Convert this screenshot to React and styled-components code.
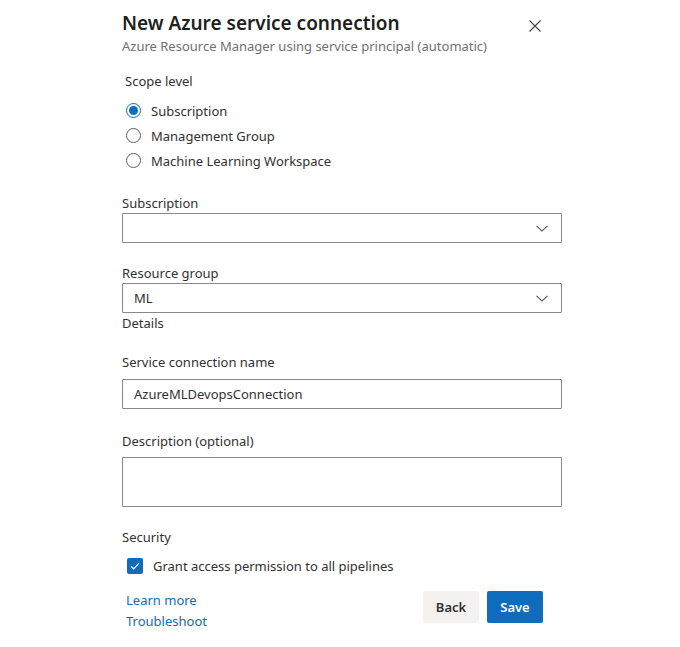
import React from "react";
import styled, { createGlobalStyle } from "styled-components";

const Global = createGlobalStyle`
  html, body { margin: 0; padding: 0; background: #ffffff; }
  body { font-family: "Segoe UI", "Noto Sans", "Liberation Sans", sans-serif; color: #323130; }
  * { box-sizing: border-box; }
`;

const Dialog = styled.div`
  width: 680px;
  height: 647px;
  padding: 9px 0 0 122px;
  background: #fff;
`;

const Panel = styled.div`
  width: 440px;
  display: flex;
  flex-direction: column;
`;

const Header = styled.div`
  display: flex;
  align-items: flex-start;
  justify-content: space-between;
`;

const TitleBlock = styled.div`
  display: flex;
  flex-direction: column;
`;

const Title = styled.h1`
  margin: 0;
  font-size: 19px;
  line-height: 28px;
  font-weight: 600;
  color: #201f1e;
`;

const Subtitle = styled.div`
  font-size: 13px;
  line-height: 18px;
  color: #707070;
`;

const CloseButton = styled.button`
  border: 0;
  background: transparent;
  padding: 0;
  margin: 11px 21px 0 0;
  width: 12px;
  height: 12px;
  display: flex;
  color: #484644;
`;

const Label = styled.div`
  font-size: 13px;
  line-height: 20px;
  color: #323130;
  margin-top: ${(p) => p.$mt || 0}px;
  margin-left: ${(p) => p.$ml || 0}px;
  margin-bottom: ${(p) => p.$mb || 0}px;
`;

const RadioGroup = styled.div`
  display: flex;
  flex-direction: column;
  margin-top: 7px;
`;

const RadioRow = styled.label`
  display: flex;
  align-items: center;
  height: 25px;
  font-size: 13px;
  color: #323130;
  padding-left: 4px;
  gap: 10px;
`;

const RadioCircle = styled.span`
  width: 15px;
  height: 15px;
  border-radius: 50%;
  border: 1px solid ${(p) => (p.$checked ? "#0f6cbd" : "#605e5c")};
  display: flex;
  align-items: center;
  justify-content: center;
  flex: none;
  &::after {
    content: "";
    width: 9px;
    height: 9px;
    border-radius: 50%;
    background: #0f6cbd;
    display: ${(p) => (p.$checked ? "block" : "none")};
  }
`;

const Field = styled.div`
  height: ${(p) => p.$h || 30}px;
  border: 1px solid #8a8886;
  border-radius: 1px;
  display: flex;
  align-items: ${(p) => (p.$multi ? "flex-start" : "center")};
  justify-content: space-between;
  padding: 0 12px 0 11px;
  font-size: 13px;
  color: #323130;
  background: #fff;
`;

const Chevron = styled.svg`
  width: 12px;
  height: 7px;
  color: #605e5c;
  flex: none;
  margin-right: 1px;
`;

const CheckRow = styled.label`
  display: flex;
  align-items: center;
  gap: 10px;
  height: 20px;
  margin-top: 9px;
  padding-left: 5px;
  font-size: 13px;
  color: #323130;
`;

const CheckBox = styled.span`
  width: 16px;
  height: 16px;
  border-radius: 2px;
  background: #0f6cbd;
  display: flex;
  align-items: center;
  justify-content: center;
  flex: none;
`;

const Footer = styled.div`
  display: flex;
  justify-content: space-between;
  align-items: flex-start;
  margin-top: 14px;
  padding: 0 19px 0 4px;
`;

const Links = styled.div`
  display: flex;
  flex-direction: column;
`;

const Link = styled.a`
  font-size: 13px;
  line-height: 21px;
  color: #0f6cbd;
  text-decoration: none;
`;

const Buttons = styled.div`
  display: flex;
  gap: 8px;
  margin-top: 1px;
`;

const Button = styled.button`
  height: 32px;
  width: 56px;
  border: 0;
  border-radius: 2px;
  font-family: inherit;
  font-size: 13px;
  font-weight: 600;
  background: ${(p) => (p.$primary ? "#0f6cbd" : "#f3f2f1")};
  color: ${(p) => (p.$primary ? "#ffffff" : "#323130")};
`;

const ChevronDown = () => (
  <Chevron viewBox="0 0 12 7" fill="none">
    <path d="M0.5 0.8 L6 6 L11.5 0.8" stroke="currentColor" strokeWidth="1.1" />
  </Chevron>
);

export default function App() {
  return (
    <>
      <Global />
      <Dialog>
        <Panel>
          <Header>
            <TitleBlock>
              <Title>New Azure service connection</Title>
              <Subtitle>Azure Resource Manager using service principal (automatic)</Subtitle>
            </TitleBlock>
            <CloseButton aria-label="Close">
              <svg width="12" height="12" viewBox="0 0 12 12">
                <path d="M0.5 0.5 L11.5 11.5 M11.5 0.5 L0.5 11.5" stroke="currentColor" strokeWidth="1.1" />
              </svg>
            </CloseButton>
          </Header>

          <Label $mt={16} $ml={3}>Scope level</Label>
          <RadioGroup>
            <RadioRow><RadioCircle $checked />Subscription</RadioRow>
            <RadioRow><RadioCircle />Management Group</RadioRow>
            <RadioRow><RadioCircle />Machine Learning Workspace</RadioRow>
          </RadioGroup>

          <Label $mt={20}>Subscription</Label>
          <Field><span /><ChevronDown /></Field>

          <Label $mt={20}>Resource group</Label>
          <Field><span>ML</span><ChevronDown /></Field>
          <Label>Details</Label>

          <Label $mt={19} $mb={7}>Service connection name</Label>
          <Field>AzureMLDevopsConnection</Field>

          <Label $mt={22} $mb={6}>Description (optional)</Label>
          <Field $h={50} $multi />

          <Label $mt={20}>Security</Label>
          <CheckRow>
            <CheckBox>
              <svg width="10" height="8" viewBox="0 0 10 8" fill="none">
                <path d="M1 4.2 L3.7 6.8 L9 1.2" stroke="#fff" strokeWidth="1.2" />
              </svg>
            </CheckBox>
            Grant access permission to all pipelines
          </CheckRow>

          <Footer>
            <Links>
              <Link href="#">Learn more</Link>
              <Link href="#">Troubleshoot</Link>
            </Links>
            <Buttons>
              <Button>Back</Button>
              <Button $primary>Save</Button>
            </Buttons>
          </Footer>
        </Panel>
      </Dialog>
    </>
  );
}
